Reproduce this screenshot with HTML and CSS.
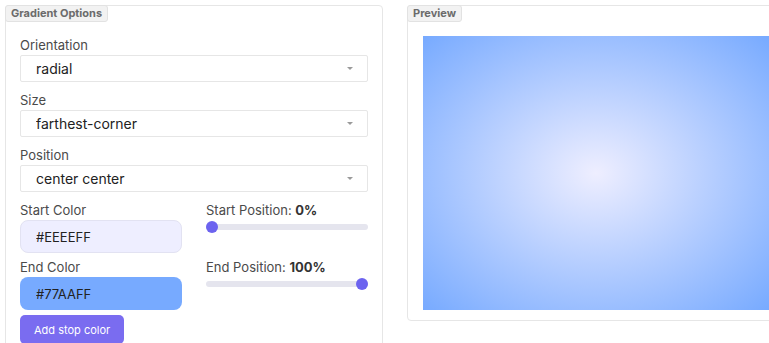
FILE: index.html
```html
<!DOCTYPE html>
<html lang="en">
<head>
<meta charset="utf-8"/>
<meta content="width=device-width, initial-scale=1.0" name="viewport"/>
<title>Gradient Generator</title>
<link rel="stylesheet" href="styles.css">
</head>
<body>
<div class="layout">
  <div class="panel options">
    <div class="panel-title">Gradient Options</div>
    <div class="panel-body">
      <div class="form-group">
        <label for="orientation">Orientation</label>
        <div class="select">
          <select id="orientation">
            <option>radial</option>
            <option>linear</option>
          </select>
        </div>
      </div>
      <div class="form-group">
        <label for="size">Size</label>
        <div class="select">
          <select id="size">
            <option>farthest-corner</option>
            <option>closest-side</option>
          </select>
        </div>
      </div>
      <div class="form-group">
        <label for="position">Position</label>
        <div class="select">
          <select id="position">
            <option>center center</option>
            <option>top left</option>
          </select>
        </div>
      </div>
      <div class="stops">
        <div class="stop">
          <label for="startColor">Start Color</label>
          <input class="color-field start" id="startColor" type="text" value="#EEEEFF"/>
        </div>
        <div class="stop">
          <label for="startPos">Start Position: <b>0%</b></label>
          <input class="range" id="startPos" type="range" min="0" max="100" value="0"/>
        </div>
        <div class="stop">
          <label for="endColor">End Color</label>
          <input class="color-field end" id="endColor" type="text" value="#77AAFF"/>
        </div>
        <div class="stop">
          <label for="endPos">End Position: <b>100%</b></label>
          <input class="range" id="endPos" type="range" min="0" max="100" value="100"/>
        </div>
      </div>
      <button class="btn" type="button">Add stop color</button>
    </div>
  </div>
  <div class="panel preview">
    <div class="panel-title">Preview</div>
    <div class="preview-body">
      <div class="swatch"></div>
    </div>
  </div>
</div>
</body>
</html>
```
FILE: styles.css
```css
html, body {
    overflow: hidden;
}
body {
    font-family: Inter, "Noto Sans", sans-serif;
    margin: 0;
    padding: 5px;
    background: #ffffff;
    color: #333;
}
.layout {
    display: flex;
    align-items: flex-start;
    gap: 24px;
}
.panel {
    flex-shrink: 0;
    width: 376px;
    border: 1px solid #e6e6e6;
    border-radius: 4px;
    background: #ffffff;
}
.panel-title {
    width: fit-content;
    margin: -1px 0 0 -1px;
    padding: 1px 5px;
    font-size: 11px;
    line-height: 13px;
    font-weight: 700;
    color: #6b6b6b;
    background: #f2f2f2;
    border: 1px solid #e2e2e2;
    border-radius: 3px;
}
.panel-body {
    padding: 14px 14px 20px 14px;
}
.form-group {
    margin-bottom: 9px;
}
label {
    display: block;
    font-size: 13px;
    line-height: 18px;
    color: #4a4a4a;
    margin-bottom: 1px;
}
label b {
    color: #333;
}
.select {
    position: relative;
}
.select::after {
    content: "";
    position: absolute;
    right: 15px;
    top: 12px;
    border-left: 3.5px solid transparent;
    border-right: 3.5px solid transparent;
    border-top: 3.5px solid #9a9a9a;
}
select {
    appearance: none;
    -webkit-appearance: none;
    width: 100%;
    height: 27px;
    padding: 0 15px;
    border: 1px solid #e6e6e6;
    border-radius: 2px;
    background: #ffffff;
    font-family: inherit;
    font-size: 14px;
    color: #222;
    outline: none;
}
.stops {
    display: grid;
    grid-template-columns: 1fr 1fr;
    column-gap: 24px;
    row-gap: 5px;
}
.color-field {
    box-sizing: border-box;
    width: 100%;
    height: 33px;
    padding: 0 15px;
    border: 1px solid transparent;
    border-radius: 8px;
    font-family: inherit;
    font-size: 13px;
    color: #222;
    outline: none;
}
.color-field.start {
    background: #EEEEFF;
    border-color: #e2e2f2;
}
.color-field.end {
    background: #77AAFF;
}
.range {
    -webkit-appearance: none;
    appearance: none;
    display: block;
    width: 100%;
    height: 14px;
    margin: 1px 0 0;
    background: transparent;
}
.range::-webkit-slider-runnable-track {
    height: 6px;
    border-radius: 3px;
    background: #e5e5ee;
}
.range::-webkit-slider-thumb {
    -webkit-appearance: none;
    width: 12px;
    height: 12px;
    margin-top: -3px;
    border-radius: 50%;
    background: #6c63ef;
}
.btn {
    margin-top: 5px;
    height: 29px;
    padding: 0 14px;
    border: none;
    border-radius: 5px;
    background: #7a6cf0;
    color: #ffffff;
    font-family: inherit;
    font-size: 11px;
    cursor: pointer;
}
.preview-body {
    padding: 14px 15px 10px 15px;
}
.swatch {
    width: 346px;
    height: 274px;
    background: radial-gradient(farthest-corner at center center, #EEEEFF 0%, #77AAFF 100%);
}
```
